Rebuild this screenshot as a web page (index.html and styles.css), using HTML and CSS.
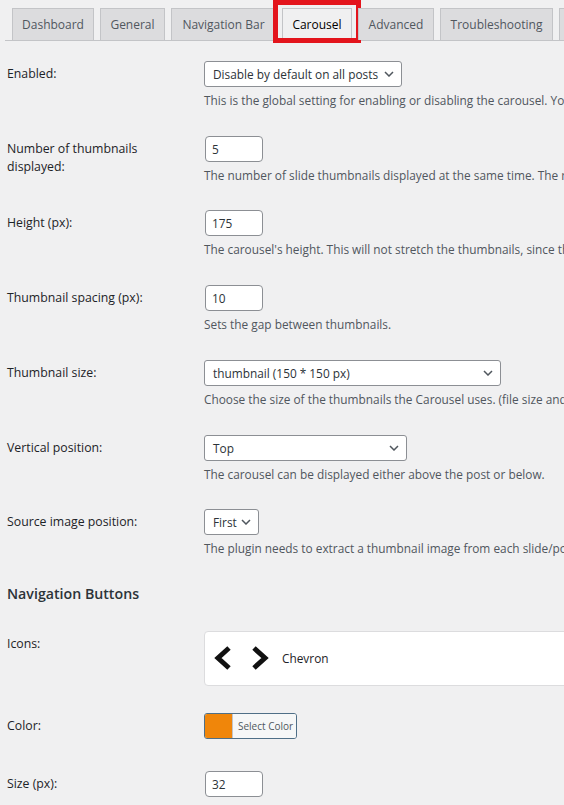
FILE: index.html
```html
<!DOCTYPE html>
<html lang="en">
<head>
<meta charset="utf-8">
<title>Carousel settings</title>
<link rel="stylesheet" href="styles.css">
</head>
<body>
<div class="page">
  <nav class="tabs">
    <a class="tab t-dash">Dashboard</a>
    <a class="tab t-general">General</a>
    <a class="tab t-nav">Navigation Bar</a>
    <a class="tab t-carousel active">Carousel<span class="highlight"></span></a>
    <a class="tab t-adv">Advanced</a>
    <a class="tab t-trouble">Troubleshooting</a>
    <a class="tab t-help">Help</a>
  </nav>

  <div class="form">
    <div class="row">
      <div class="label">Enabled:</div>
      <div class="field">
        <div class="select w-enabled"><span>Disable by default on all posts</span><svg class="caret" width="10" height="6" viewBox="0 0 10 6"><polyline points="1,1 5,5 9,1"/></svg></div>
        <p class="desc">This is the global setting for enabling or disabling the carousel. You can override it on a per-post basis.</p>
      </div>
    </div>

    <div class="row">
      <div class="label">Number of thumbnails displayed:</div>
      <div class="field">
        <input class="input" type="text" value="5" readonly>
        <p class="desc">The number of slide thumbnails displayed at the same time. The rest will be accessible by scrolling.</p>
      </div>
    </div>

    <div class="row">
      <div class="label">Height (px):</div>
      <div class="field">
        <input class="input" type="text" value="175" readonly>
        <p class="desc">The carousel's height. This will not stretch the thumbnails, since they keep their aspect ratio.</p>
      </div>
    </div>

    <div class="row">
      <div class="label">Thumbnail spacing (px):</div>
      <div class="field">
        <input class="input" type="text" value="10" readonly>
        <p class="desc">Sets the gap between thumbnails.</p>
      </div>
    </div>

    <div class="row">
      <div class="label">Thumbnail size:</div>
      <div class="field">
        <div class="select w-size"><span>thumbnail (150 * 150 px)</span><svg class="caret" width="10" height="6" viewBox="0 0 10 6"><polyline points="1,1 5,5 9,1"/></svg></div>
        <p class="desc">Choose the size of the thumbnails the Carousel uses. (file size and quality)</p>
      </div>
    </div>

    <div class="row">
      <div class="label">Vertical position:</div>
      <div class="field">
        <div class="select w-vert"><span>Top</span><svg class="caret" width="10" height="6" viewBox="0 0 10 6"><polyline points="1,1 5,5 9,1"/></svg></div>
        <p class="desc">The carousel can be displayed either above the post or below.</p>
      </div>
    </div>

    <div class="row">
      <div class="label">Source image position:</div>
      <div class="field">
        <div class="select w-source"><span>First</span><svg class="caret" width="10" height="6" viewBox="0 0 10 6"><polyline points="1,1 5,5 9,1"/></svg></div>
        <p class="desc">The plugin needs to extract a thumbnail image from each slide/post to display in the carousel.</p>
      </div>
    </div>

    <h2 class="section-title">Navigation Buttons</h2>

    <div class="row">
      <div class="label">Icons:</div>
      <div class="field">
        <div class="iconbox">
          <svg class="chev" width="20" height="26" viewBox="0 0 20 26"><polyline points="15,3 4,13 15,23"/></svg>
          <svg class="chev" width="20" height="26" viewBox="0 0 20 26"><polyline points="5,3 16,13 5,23"/></svg>
          <span class="icon-name">Chevron</span>
        </div>
      </div>
    </div>

    <div class="row color-row">
      <div class="label">Color:</div>
      <div class="field">
        <div class="color-btn"><span class="swatch"></span><span class="color-label">Select Color</span></div>
      </div>
    </div>

    <div class="row">
      <div class="label">Size (px):</div>
      <div class="field">
        <input class="input" type="text" value="32" readonly>
      </div>
    </div>
  </div>
</div>
</body>
</html>
```

FILE: styles.css
```css
html, body {
  margin: 0;
  padding: 0;
}

body {
  width: 564px;
  height: 805px;
  overflow: hidden;
  background: #f0f0f1;
  font-family: "Open Sans", "Noto Sans", sans-serif;
  font-size: 11.85px;
  color: #1d2327;
}

/* ---------- tabs ---------- */
.tabs {
  display: flex;
  align-items: flex-end;
  margin-left: 5px;
  padding-top: 8px;
  border-bottom: 1px solid #c3c4c7;
  height: 32px;
}

.tab {
  position: relative;
  flex-shrink: 0;
  box-sizing: border-box;
  height: 32px;
  margin-left: 6px;
  padding: 0;
  border: 1px solid #c3c4c7;
  border-bottom: 0;
  background: #dcdcde;
  color: #50575e;
  font-size: 12px;
  font-weight: 500;
  line-height: 32px;
  text-align: center;
  white-space: nowrap;
}

.t-dash { width: 82px; margin-left: 7px; }
.t-general { width: 65px; }
.t-nav { width: 105px; }
.t-carousel { width: 70px; }
.t-adv { width: 76px; }
.t-trouble { width: 113px; }
.t-help { width: 60px; }

.tab.active {
  height: 33px;
  margin-bottom: -1px;
  background: #f0f0f1;
  color: #000;
}

.highlight {
  position: absolute;
  left: -10px;
  top: -9px;
  width: 88px;
  height: 43px;
  box-sizing: border-box;
  border: 5px solid #e3141c;
}

/* ---------- form ---------- */
.form {
  margin-top: 7px;
  padding-left: 7px;
}

.row {
  display: grid;
  grid-template-columns: 197px auto;
  padding: 13px 0;
}

.label {
  box-sizing: border-box;
  padding: 4px 14px 0 0;
  font-size: 12.3px;
  line-height: 18px;
  font-weight: 500;
  color: #1d2327;
}

.field {
  min-width: 0;
}

.select {
  box-sizing: border-box;
  display: flex;
  align-items: center;
  justify-content: space-between;
  height: 26px;
  padding: 0 7px 0 8px;
  border: 1px solid #8c8f94;
  border-radius: 3px;
  background: #fff;
  color: #2c3338;
  white-space: nowrap;
}

.w-enabled { width: 198px; }
.w-size { width: 297px; }
.w-vert { width: 203px; }
.w-source { width: 55px; }

.caret {
  flex-shrink: 0;
  fill: none;
  stroke: #50575e;
  stroke-width: 1.5;
}

.input {
  display: block;
  box-sizing: border-box;
  width: 58px;
  height: 26px;
  margin: 0 0 0 1px;
  padding: 0 0 0 6px;
  border: 1px solid #8c8f94;
  border-radius: 4px;
  background: #fff;
  color: #2c3338;
  font: inherit;
  line-height: 24px;
  outline: none;
}

.desc {
  margin: 4px 0 0;
  line-height: 18.7px;
  color: #50575e;
  white-space: nowrap;
}

.section-title {
  margin: 13px 0 14px;
  font-size: 14.2px;
  font-weight: 600;
  line-height: 20px;
  color: #2c3338;
}

/* icons picker */
.iconbox {
  box-sizing: border-box;
  display: flex;
  align-items: center;
  width: 420px;
  height: 55px;
  padding-left: 9px;
  border: 1px solid #dcdcde;
  border-radius: 4px;
  background: #fff;
}

.chev {
  flex-shrink: 0;
  fill: none;
  stroke: #111;
  stroke-width: 5;
  stroke-linejoin: miter;
}

.chev + .chev {
  margin-left: 15px;
}

.icon-name {
  margin-left: 13px;
  color: #1d2327;
}

/* colour picker */
.color-row {
  padding: 14px 0 19px;
}

.color-btn {
  box-sizing: border-box;
  display: flex;
  width: 93px;
  height: 26px;
  border: 1px solid #4f6f87;
  border-radius: 3px;
  overflow: hidden;
}

.swatch {
  width: 27px;
  background: #f0860a;
}

.color-label {
  flex: 1;
  padding-left: 5px;
  border-left: 1px solid #c3c4c7;
  background: #f6f7f7;
  color: #50575e;
  font-size: 10px;
  line-height: 24px;
  white-space: nowrap;
}
```
